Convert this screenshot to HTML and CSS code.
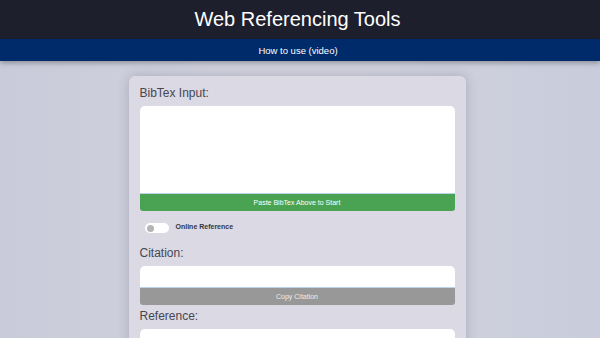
FILE: index.html
```html
<!DOCTYPE html>
<html lang="en">
<head>
    <meta charset="UTF-8">
    <meta name="viewport" content="width=device-width, initial-scale=1.0">
    <title>Web Referencing Tools</title>
    <link rel="stylesheet" href="styles.css">
</head>
<body>
    <header class="site-header">
        <h1>Web Referencing Tools</h1>
    </header>
    <nav class="site-nav">
        <a href="#">How to use (video)</a>
    </nav>

    <main class="page">
        <div class="tool-card">
            <label class="field-label">BibTex Input:</label>
            <textarea class="text-box bibtex-box"></textarea>
            <button class="action-btn start">Paste BibTex Above to Start</button>

            <div class="toggle-row">
                <span class="toggle"><span class="knob"></span></span>
                <span class="toggle-label">Online Reference</span>
            </div>

            <label class="field-label">Citation:</label>
            <div class="text-box output-box"></div>
            <button class="action-btn copy">Copy Citation</button>

            <label class="field-label">Reference:</label>
            <div class="text-box output-box"></div>
            <button class="action-btn copy">Copy Reference</button>
        </div>
    </main>
</body>
</html>
```

FILE: styles.css
```css
* {
    margin: 0;
    padding: 0;
    box-sizing: border-box;
}

body {
    font-family: 'Liberation Sans', Arial, sans-serif;
    background: linear-gradient(90deg, #c9cbda, #d2d2de 40%, #d2d2de 60%, #c8ccdb);
    min-height: 100vh;
}

.site-header {
    background: #1e1f2d;
    height: 39px;
    display: flex;
    align-items: center;
    justify-content: center;
    padding-right: 5px;
}

.site-header h1 {
    color: white;
    font-size: 20px;
    font-weight: normal;
}

.site-nav {
    background: #002b6a;
    height: 22px;
    display: flex;
    align-items: center;
    justify-content: center;
    padding-right: 4px;
    box-shadow: 0 2px 5px rgba(0, 0, 0, 0.3);
    position: relative;
}

.site-nav a {
    color: white;
    font-size: 9.5px;
    text-decoration: none;
}

.page {
    display: flex;
    justify-content: center;
    padding: 15px 6px 0 0;
}

.tool-card {
    width: 337px;
    background: #dad9e4;
    border-radius: 6px;
    padding: 10px 11px;
    box-shadow: 0 0 12px rgba(60, 60, 90, 0.25);
    display: flex;
    flex-direction: column;
}

.field-label {
    color: #474750;
    font-size: 12px;
    line-height: 14px;
    margin-bottom: 6px;
}

.text-box {
    display: block;
    width: 100%;
    background: white;
    border: none;
    border-radius: 5px 5px 0 0;
    resize: none;
}

.bibtex-box {
    height: 88px;
}

.output-box {
    height: 22px;
}

.action-btn {
    display: block;
    width: 100%;
    height: 17px;
    border: none;
    border-radius: 0 0 3px 3px;
    color: white;
    font-family: inherit;
    font-size: 7px;
    box-shadow: 0 -1px 0 rgba(90, 140, 200, 0.4);
}

.action-btn.start {
    background: #4aa352;
}

.action-btn.copy {
    background: #989898;
    color: #ececec;
    margin-bottom: 4px;
}

.toggle-row {
    display: flex;
    align-items: center;
    gap: 7px;
    padding-left: 5px;
    margin: 12px 0 13px;
}

.toggle {
    width: 24px;
    height: 10px;
    background: white;
    border-radius: 5px;
    display: flex;
    align-items: center;
    padding-left: 2px;
}

.knob {
    width: 7px;
    height: 7px;
    border-radius: 50%;
    background: #b5b5b5;
}

.toggle-label {
    font-size: 7px;
    font-weight: bold;
    color: #35353d;
    margin-top: -4px;
}
```
